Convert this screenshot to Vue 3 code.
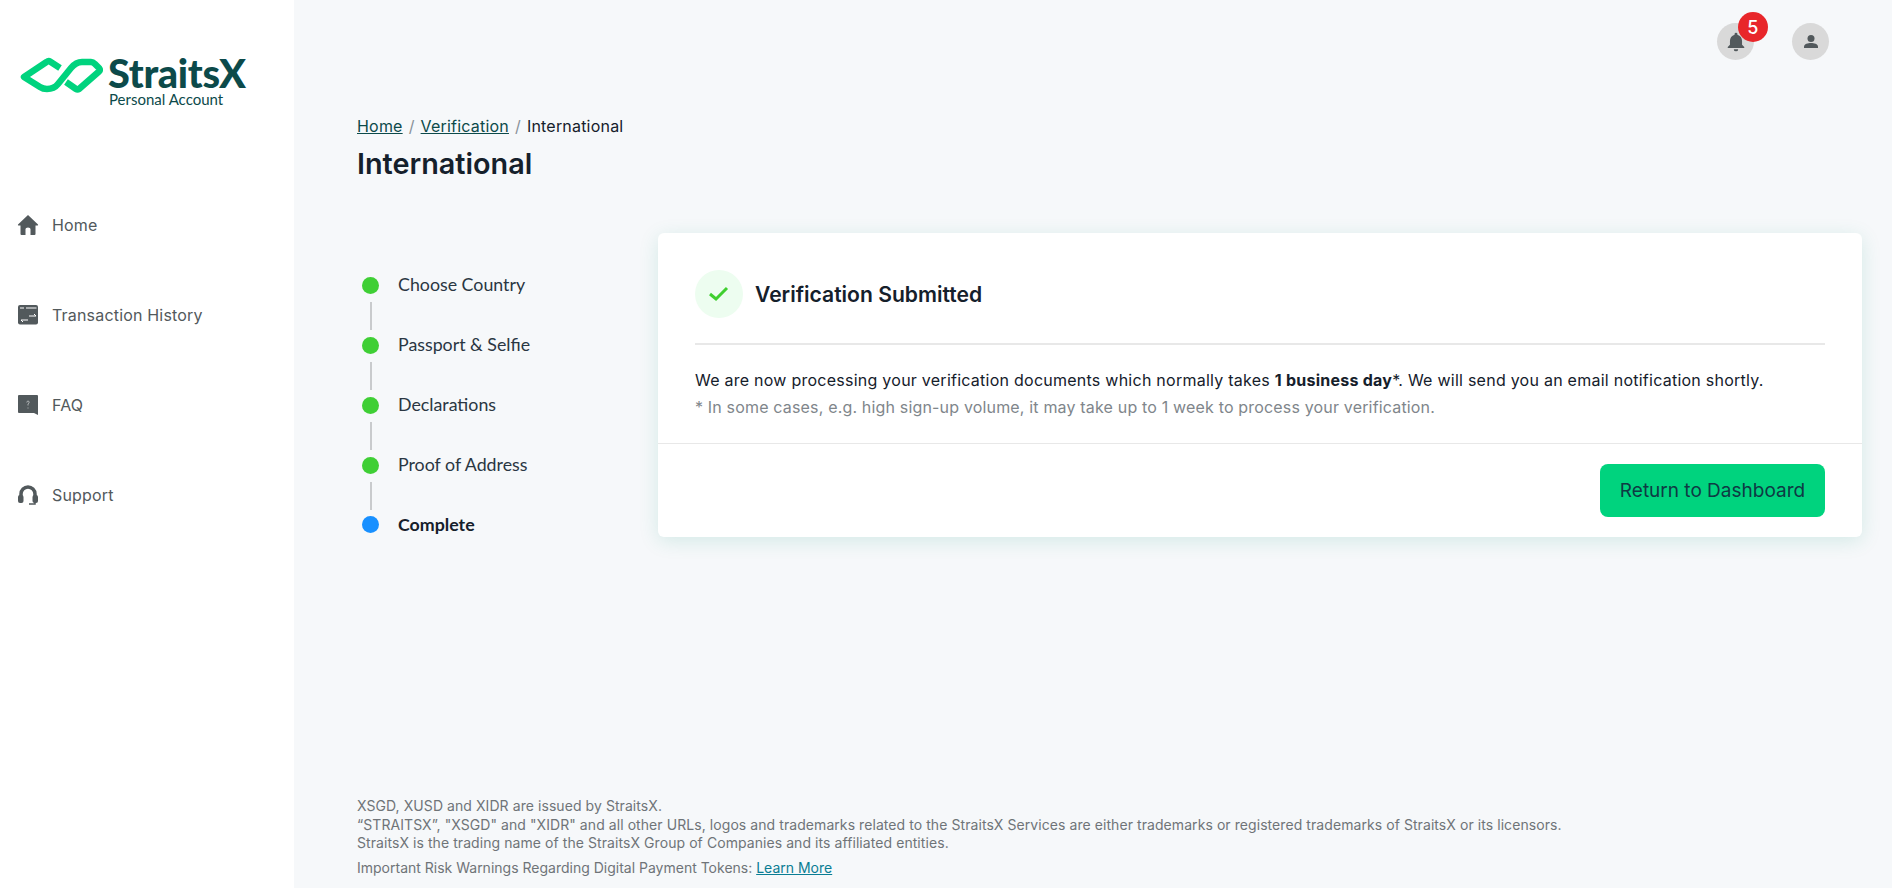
<script setup>
const nav = [
  { label: 'Home', icon: 'home' },
  { label: 'Transaction History', icon: 'tx' },
  { label: 'FAQ', icon: 'faq' },
  { label: 'Support', icon: 'support' },
]
const steps = ['Choose Country', 'Passport & Selfie', 'Declarations', 'Proof of Address']
</script>

<template>
  <div class="page">
    <aside class="sidebar">
      <div class="logo">
        <svg class="mark" width="84" height="38" viewBox="0 0 84 38" fill="none">
          <path d="M41 12 L31 5.500 Q29.500 4.500 27.500 6 L5 21 L21 31 Q24 33 28 33 Q35 33 39 28 L52 12 Q57 6 63 6 L72 6 Q74 6 76 8 L80 12 Q81.500 14 80 15.500 L60 33 Q58.500 34 57 33 L47 26" stroke="#00d37e" stroke-width="6.500" stroke-linejoin="round"/>
        </svg>
        <div class="wordmark">
          <div class="brand">StraitsX</div>
          <div class="sub">Personal Account</div>
        </div>
      </div>
      <nav class="nav">
        <a v-for="item in nav" :key="item.label" class="nav-item">
          <svg width="22" height="22" viewBox="0 0 22 22" fill="#52595c">
            <path v-if="item.icon === 'home'" d="M11 1 L21 10.500 Q21.500 11.500 20.500 11.500 L18.500 11.500 L18.500 20 Q18.500 21 17.500 21 L13.500 21 L13.500 15 Q13.500 13.500 11 13.500 Q8.500 13.500 8.500 15 L8.500 21 L4.500 21 Q3.500 21 3.500 20 L3.500 11.500 L1.500 11.500 Q.5 11.500 1 10.500 Z"/>
            <template v-else-if="item.icon === 'tx'">
              <rect x="1" y="1" width="20" height="19.500" rx="2"/>
              <path d="M9 4h10.500M3 4h4M12 12h7l-2-2M11 16H4l2 2" stroke="#fff" stroke-width="1" fill="none"/>
            </template>
            <template v-else-if="item.icon === 'faq'">
              <path d="M2 1h18a1 1 0 0 1 1 1v19l-4-2H2a1 1 0 0 1-1-1V2a1 1 0 0 1 1-1z"/>
              <path d="M9.800 8.500Q10 7 11 7t1.200 1.200q0 1-1.200 1.800v1.500M11 13.500v1" stroke="#c6c9ca" stroke-width=".8" fill="none"/>
            </template>
            <template v-else>
              <path d="M4 12V10a7 7 0 0 1 14 0v2" fill="none" stroke="#52595c" stroke-width="3.500"/>
              <rect x="1" y="11" width="5.500" height="8" rx="2"/>
              <rect x="15.500" y="11" width="5.500" height="8" rx="2"/>
              <path d="M18 18v2h-6" fill="none" stroke="#52595c" stroke-width="1.500"/>
            </template>
          </svg>
          <span>{{ item.label }}</span>
        </a>
      </nav>
    </aside>

    <main class="main">
      <header class="topbar">
        <div class="circle bell">
          <svg width="22" height="22" viewBox="0 0 20 20" fill="#52595c">
            <path d="M10 1.500a1.300 1.300 0 0 1 1.300 1.300v.5C14 4 15.500 6.300 15.500 9v3.500l2 2v1h-15v-1l2-2V9c0-2.700 1.500-5 4.200-5.700v-.5A1.300 1.300 0 0 1 10 1.500z"/>
            <path d="M8 16.500h4a2 2 0 0 1-4 0z"/>
          </svg>
          <span class="badge">5</span>
        </div>
        <div class="circle">
          <svg width="20" height="20" viewBox="0 0 20 20" fill="#52595c">
            <circle cx="10" cy="6.500" r="3.500"/>
            <path d="M3 16v-1.500C3 12 7 11 10 11s7 1 7 3.500V16z"/>
          </svg>
        </div>
      </header>

      <div class="content">
        <div class="crumbs">
          <a>Home</a><span class="sep">/</span><a>Verification</a><span class="sep">/</span><span>International</span>
        </div>
        <h1>International</h1>

        <div class="columns">
          <ol class="steps">
            <li v-for="s in steps" :key="s" class="step done">
              <span class="dot"></span><span class="step-label">{{ s }}</span>
              <span class="line"></span>
            </li>
            <li class="step current">
              <span class="dot"></span><span class="step-label">Complete</span>
            </li>
          </ol>

          <section class="card">
            <div class="card-body">
              <div class="card-head">
                <span class="check">
                  <svg width="20" height="20" viewBox="0 0 20 20" fill="none">
                    <path d="M1 10 L7 15 L18 4" stroke="#3fcf2f" stroke-width="3"/>
                  </svg>
                </span>
                <h2>Verification Submitted</h2>
              </div>
              <p class="msg">We are now processing your verification documents which normally takes <b>1 business day</b>*. We will send you an email notification shortly.</p>
              <p class="note">* In some cases, e.g. high sign-up volume, it may take up to 1 week to process your verification.</p>
            </div>
            <div class="card-foot">
              <button class="btn">Return to Dashboard</button>
            </div>
          </section>
        </div>
      </div>

      <footer class="footer">
        <p>XSGD, XUSD and XIDR are issued by StraitsX.<br>“STRAITSX”, "XSGD" and "XIDR" and all other URLs, logos and trademarks related to the StraitsX Services are either trademarks or registered trademarks of StraitsX or its licensors.<br>StraitsX is the trading name of the StraitsX Group of Companies and its affiliated entities.</p>
        <p class="risk">Important Risk Warnings Regarding Digital Payment Tokens: <a>Learn More</a></p>
      </footer>
    </main>
  </div>
</template>

<style>
html, body { margin: 0; }
</style>

<style scoped>
.page { display: flex; height: 888px; overflow: hidden; background: #f6f8fa; font-family: Inter, "Noto Sans", sans-serif; color: #15202b; letter-spacing: .18px; }
.sidebar { width: 294px; flex: none; background: #fff; }
.logo { display: flex; padding: 53px 0 0 19px; height: 131px; box-sizing: border-box; gap: 5px; letter-spacing: 0; }
.mark { margin-top: 3px; }
.wordmark { color: #0c4a4a; }
.brand { font-family: Lato, sans-serif; font-weight: 900; font-size: 39.700px; line-height: 39px; letter-spacing: -.3px; }
.sub { font-size: 15px; line-height: 15px; font-family: Lato, sans-serif; margin-left: 1px; }
.nav { display: flex; flex-direction: column; padding: 81px 0 0 17px; gap: 65px; }
.nav-item { display: flex; align-items: center; gap: 13px; height: 25px; font-size: 16px; color: #52595c; }

.main { flex: 1; display: flex; flex-direction: column; min-width: 0; }
.topbar { display: flex; justify-content: flex-end; gap: 38px; padding: 23px 63px 0 0; height: 60px; box-sizing: border-box; flex: none; }
.circle { position: relative; width: 37px; height: 37px; border-radius: 50%; background: #d9d9d9; display: flex; align-items: center; justify-content: center; }
.badge { position: absolute; left: 21px; top: -11px; width: 30px; height: 30px; border-radius: 50%; background: #e8262a; color: #fff; font-size: 18px; font-weight: 500; display: flex; align-items: center; justify-content: center; }

.content { padding: 55px 30px 0 63px; flex: 1; }
.crumbs { font-size: 16px; line-height: 22px; color: #15202b; letter-spacing: .2px; }
.crumbs a { color: #0c4a4a; text-decoration: underline; }
.sep { color: #8a9299; margin: 0 6px; }
h1 { margin: 9px 0 0; font-size: 28.800px; line-height: 36px; font-weight: 600; color: #15202b; letter-spacing: 0; }

.columns { display: flex; margin-top: 51px; }
.steps { list-style: none; margin: 0; padding: 42px 0 0 5px; width: 301px; flex: none; box-sizing: border-box; }
.step { position: relative; display: flex; align-items: flex-start; height: 60px; gap: 19px; }
.dot { width: 17px; height: 17px; border-radius: 50%; background: #3fcf35; flex: none; margin-top: 2px; }
.current .dot { background: #1890ff; margin-top: 1px; }
.step-label { font-family: Lato, sans-serif; font-size: 17.800px; line-height: 20px; color: #2a3642; letter-spacing: 0; margin-top: -1px; }
.current .step-label { font-weight: 700; color: #15202b; }
.line { position: absolute; left: 7.500px; top: 27px; width: 2px; height: 28px; background: #c9cbcd; }

.card { width: 1204px; height: 304px; flex: none; background: #fff; border-radius: 6px; box-shadow: 0 4px 20px rgba(0, 150, 110, .14); display: flex; flex-direction: column; }
.card-body { flex: 1; padding: 37px 37px 0; }
.card-head { display: flex; align-items: center; gap: 12px; padding-bottom: 25px; border-bottom: 2px solid #e8e8e8; }
.check { width: 48px; height: 48px; border-radius: 50%; background: #edfdf0; display: flex; align-items: center; justify-content: center; }
h2 { margin: 0; font-size: 21.100px; font-weight: 600; color: #15202b; letter-spacing: 0; }
.msg { margin: 24px 0 0; font-size: 16px; line-height: 22px; color: #15202b; letter-spacing: .25px; }
.note { margin: 5px 0 0; font-size: 16px; line-height: 22px; color: #80868b; letter-spacing: .17px; }
.card-foot { height: 94px; flex: none; box-sizing: border-box; border-top: 1px solid #e8e8e8; display: flex; justify-content: flex-end; padding: 20px 37px 0 0; }
.btn { width: 225px; height: 53px; border: 0; border-radius: 8px; background: #00d37e; color: #0f3a44; font: inherit; font-size: 19px; letter-spacing: 0; }

.footer { padding: 0 30px 11px 63px; font-size: 14px; line-height: 18.500px; color: #6f7478; letter-spacing: .07px; }
.footer p { margin: 0; }
.footer .risk { margin-top: 6px; letter-spacing: 0; }
.footer a { color: #0a7d94; text-decoration: underline; }
</style>
